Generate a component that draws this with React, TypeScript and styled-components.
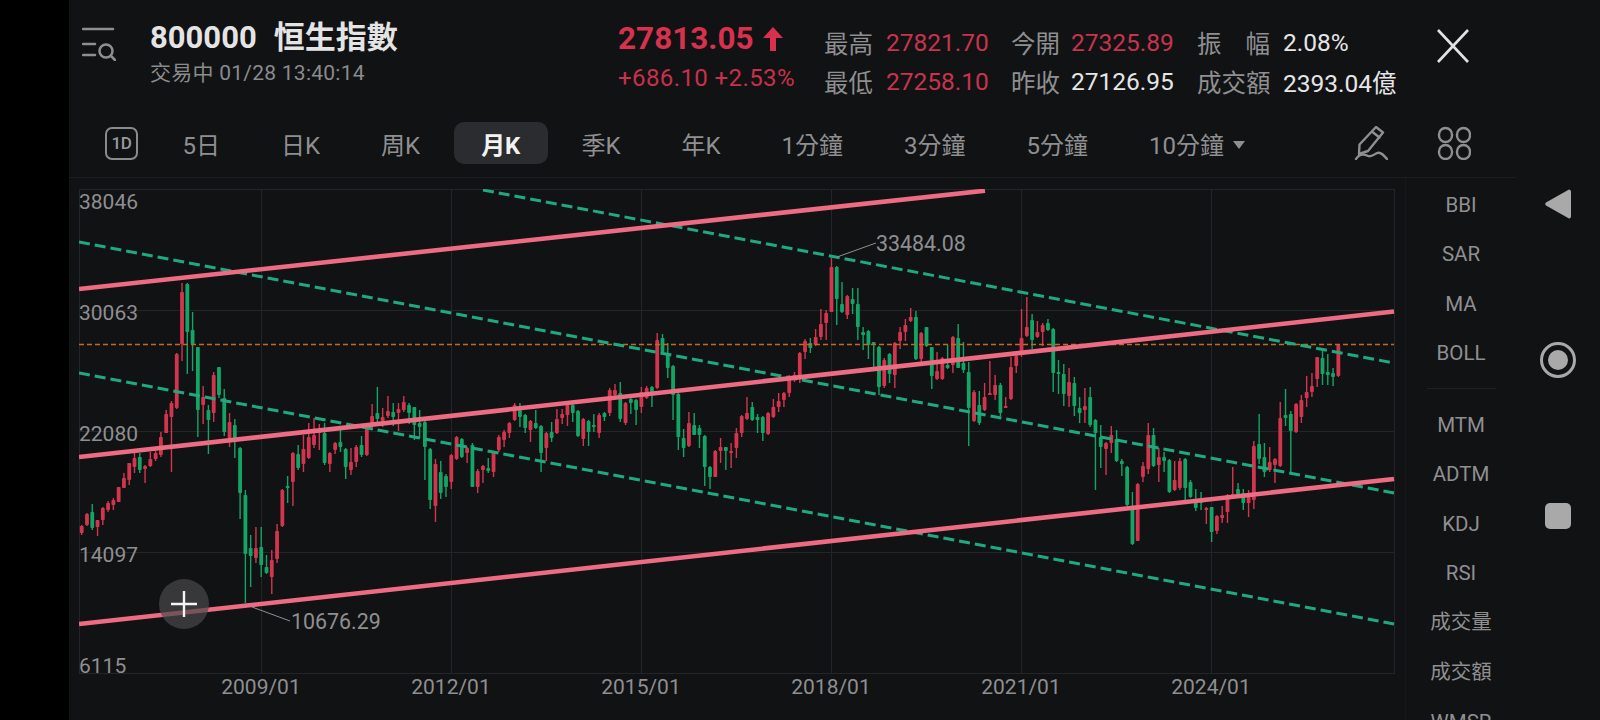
import styled, { createGlobalStyle } from "styled-components";

type Candle = [string, number, number, number, number];

// month candles: colour, body top, body bottom, wick top, wick bottom (page y)
const candles: Candle[] = [
  ["r",526,533,525,535],["r",514,525,513,526],["g",512,528,504,530],["r",520,527,520,536],["r",508,520,507,525],
  ["r",503,510,501,512],["r",500,505,498,510],["r",487,502,487,502],["r",478,488,473,488],["r",463,480,463,485],
  ["r",458,467,453,473],["g",457,470,453,473],["r",466,469,465,483],["r",459,466,452,467],["r",453,459,451,461],
  ["r",437,455,432,457],["r",414,433,410,433],["r",403,417,401,472],["r",354,408,353,409],["r",292,344,283,361],
  ["g",284,332,283,374],["g",330,344,312,371],["g",347,410,347,437],["r",397,405,386,424],["g",410,420,405,454],
  ["r",375,413,372,422],["g",367,395,367,398],["g",398,432,389,436],["r",422,438,413,447],["g",425,440,419,458],
  ["g",448,493,447,519],["g",495,554,490,603],["g",548,556,535,587],["r",548,558,527,563],["g",547,565,527,577],
  ["g",567,573,555,574],["r",560,577,550,594],["r",531,559,524,563],["r",490,526,489,527],["g",486,488,476,503],
  ["r",453,482,452,506],["g",454,468,445,470],["r",449,464,435,472],["r",437,458,423,459],["r",435,445,418,448],
  ["r",429,433,424,450],["g",433,463,423,465],["r",453,464,452,472],["r",443,450,442,454],["g",442,447,430,452],
  ["g",449,467,448,479],["r",462,470,448,475],["r",447,462,445,467],["g",445,455,436,457],["r",428,455,427,456],
  ["r",416,425,404,430],["g",413,419,387,422],["r",417,421,408,427],["r",411,416,396,418],["g",412,417,403,426],
  ["r",409,413,403,431],["r",402,410,396,412],["g",405,413,403,424],["g",407,425,407,440],["g",423,427,410,438],
  ["g",422,447,421,480],["g",449,500,448,509],["r",464,506,459,522],["g",472,493,461,499],["g",476,487,474,497],
  ["r",455,482,454,489],["r",437,459,436,460],["g",439,457,438,458],["r",448,453,447,463],["g",445,487,443,487],
  ["r",471,487,469,493],["r",466,470,465,483],["g",468,471,458,473],["r",453,472,453,477],["r",437,450,435,452],
  ["r",432,440,430,447],["r",423,433,422,438],["r",405,420,403,421],["g",410,417,403,427],["g",415,428,414,433],
  ["r",421,430,420,442],["g",423,428,410,429],["g",426,453,425,472],["r",433,448,432,461],["g",432,438,422,442],
  ["r",419,433,409,434],["r",414,418,409,424],["r",405,415,403,426],["g",405,413,403,422],["g",411,436,410,437],
  ["r",419,439,418,446],["g",421,432,420,446],["g",425,427,414,432],["r",415,433,413,438],["g",413,417,412,421],
  ["r",390,413,388,416],["r",390,395,384,397],["g",393,419,382,422],["r",403,423,402,425],["g",399,403,398,414],
  ["g",400,410,399,425],["r",392,407,387,413],["r",388,398,386,399],["g",387,392,386,407],["r",340,388,333,389],
  ["g",338,352,334,353],["g",353,368,343,378],["g",366,395,365,420],["g",394,437,393,450],["g",438,448,429,457],
  ["r",423,446,412,447],["g",425,435,413,435],["g",428,435,425,448],["g",436,467,435,486],["g",467,477,466,489],
  ["r",451,477,450,477],["r",447,451,438,463],["g",447,451,447,470],["r",451,452,443,468],["r",433,448,428,458],
  ["r",416,433,415,437],["r",413,419,397,420],["g",407,420,402,421],["g",417,420,414,433],["g",417,433,416,441],
  ["r",413,434,412,435],["r",407,417,399,418],["r",401,407,393,412],["r",393,400,392,407],["r",380,393,375,397],
  ["r",375,380,372,382],["r",353,377,352,383],["r",341,352,339,359],["g",343,348,338,353],["r",337,345,329,346],
  ["r",324,337,309,340],["r",313,323,310,340],["r",267,312,258,312],["g",267,299,266,325],["g",304,312,282,313],
  ["r",296,315,295,319],["g",299,304,288,314],["g",304,327,288,340],["g",332,335,327,350],["g",331,345,330,359],
  ["g",342,344,342,367],["g",347,387,346,395],["r",360,386,358,388],["g",354,374,353,383],["r",343,375,342,388],
  ["r",332,341,327,349],["r",325,332,319,341],["r",317,321,308,322],["g",317,359,311,360],["r",333,359,332,362],
  ["g",327,346,327,347],["g",347,376,347,389],["r",371,379,352,380],["r",358,379,357,380],["g",365,368,345,369],
  ["r",337,365,336,373],["g",338,368,324,368],["g",363,370,342,373],["g",372,408,362,446],["r",392,421,390,422],
  ["g",405,423,391,425],["r",397,410,383,411],["r",393,394,361,395],["r",385,395,375,400],["g",385,413,383,416],
  ["r",406,407,397,408],["r",367,399,357,400],["r",356,366,355,373],["r",338,355,309,357],["r",327,336,297,337],
  ["g",320,340,314,349],["r",332,337,321,338],["r",325,332,323,346],["g",323,330,319,331],["g",329,373,328,392],
  ["g",372,374,360,394],["g",374,394,364,406],["r",382,396,368,407],["g",383,406,377,416],["g",408,413,397,423],
  ["r",406,410,388,423],["g",397,425,387,427],["g",420,433,419,490],["g",437,447,425,468],["r",443,449,442,475],
  ["r",435,443,426,453],["g",439,461,430,462],["g",461,464,459,476],["g",467,505,466,506],["g",507,544,492,545],
  ["r",484,541,483,541],["r",466,477,462,482],["r",435,469,423,474],["g",435,466,428,467],["r",457,465,448,482],
  ["g",457,461,452,472],["g",460,492,459,493],["r",480,490,461,491],["r",461,488,458,490],["g",459,488,458,500],
  ["g",482,497,480,498],["g",500,508,489,511],["g",500,503,492,510],["r",508,509,507,524],["g",507,532,507,542],
  ["r",516,531,515,534],["r",515,518,506,523],["r",495,512,494,523],["r",494,496,467,497],["g",489,495,483,497],
  ["g",493,503,489,510],["r",494,503,490,517],["r",446,500,441,509],["g",444,459,414,464],["g",457,472,443,477],
  ["r",462,470,447,472],["r",459,465,458,483],["r",418,466,402,467],["g",415,418,389,426],["g",414,431,411,472],
  ["r",404,432,403,433],["r",400,417,395,423],["r",392,398,376,407],["r",386,392,373,397],["r",357,379,357,387],
  ["g",358,374,350,385],["g",372,375,354,385],["g",373,377,368,386],["r",345,376,344,377],
];

const hGrid = [310, 431, 552];
const vGrid = [261.5, 451.5, 641.5, 831.5, 1021.5, 1211.5];

const priceLabels = [
  { text: "38046", y: 209 },
  { text: "30063", y: 320 },
  { text: "22080", y: 441 },
  { text: "14097", y: 562 },
  { text: "6115", y: 673 },
];

const dateLabels = [
  { text: "2009/01", x: 261 },
  { text: "2012/01", x: 451 },
  { text: "2015/01", x: 641 },
  { text: "2018/01", x: 831 },
  { text: "2021/01", x: 1021 },
  { text: "2024/01", x: 1211 },
];

const pinkLines = [
  [79, 289, 985, 190.7],
  [79, 457, 1394, 311.5],
  [79, 624, 1394, 479],
];

const greenLines = [
  [483, 190, 1394, 363],
  [79, 242, 1394, 493],
  [79, 373, 1394, 624],
];

const tabs = ["5日", "日K", "周K", "月K", "季K", "年K", "1分鐘", "3分鐘", "5分鐘"];
const indicatorsTop = ["BBI", "SAR", "MA", "BOLL"];
const indicatorsMiddle = ["MTM", "ADTM", "KDJ", "RSI"];
const indicatorsVolume = ["成交量", "成交額"];

const Global = createGlobalStyle`
  html, body {
    margin: 0;
    padding: 0;
    background: #000;
  }
  body {
    font-family: Roboto, "Noto Sans CJK TC", sans-serif;
  }
`;

const Page = styled.div`
  display: flex;
  width: 1600px;
  height: 720px;
  overflow: hidden;
  background: #111214;
`;

const LeftEdge = styled.div`
  width: 69px;
  flex: none;
  background: #000;
`;

const Main = styled.div`
  width: 1447px;
  flex: none;
  display: flex;
  flex-direction: column;
`;

const Header = styled.header`
  height: 178px;
  flex: none;
  box-sizing: border-box;
  border-bottom: 1px solid #1c1d20;
`;

const TopRow = styled.div`
  display: flex;
  height: 108px;
  padding-left: 13px;
`;

const MenuIcon = styled.svg`
  width: 34px;
  height: 34px;
  flex: none;
  margin-top: 27px;
  fill: none;
  stroke: #8f8f91;
  stroke-width: 2.5;
  stroke-linecap: round;
`;

const TitleBlock = styled.div`
  width: 502px;
  flex: none;
  padding: 19px 0 0 34px;
  box-sizing: border-box;
`;

const Title = styled.div`
  display: flex;
  gap: 17px;
  font-size: 31px;
  line-height: 38px;
  font-weight: 700;
  color: #e4e4e4;
  white-space: nowrap;
`;

const SubTitle = styled.div`
  margin-top: 2px;
  font-size: 21px;
  line-height: 28px;
  letter-spacing: 0.25px;
  color: #8a8b8d;
  white-space: nowrap;
`;

const Quote = styled.div`
  width: 206px;
  flex: none;
  padding-top: 19px;
  box-sizing: border-box;
  color: #d7314e;
`;

const QuotePrice = styled.div`
  display: flex;
  align-items: center;
  gap: 9px;
  font-size: 31.5px;
  line-height: 40px;
  font-weight: 700;
`;

const QuoteChange = styled.div`
  font-size: 24px;
  line-height: 30px;
  letter-spacing: 0.4px;
  margin-top: 4px;
  color: #c9304c;
  white-space: nowrap;
`;

const Stats = styled.div`
  display: grid;
  grid-template-columns: 62px 125px 60px 126px 86px 150px;
  grid-auto-rows: 39px;
  align-items: center;
  flex: none;
  padding-top: 23px;
  font-size: 24.5px;
  white-space: nowrap;
`;

const StatLabel = styled.span<{ $wide?: boolean }>`
  display: flex;
  justify-content: space-between;
  width: ${(p) => (p.$wide ? 73 : 48)}px;
  color: #8f8f91;
`;

const StatValue = styled.span<{ $red?: boolean }>`
  color: ${(p) => (p.$red ? "#c8334d" : "#e6e6e6")};
`;

const CloseIcon = styled.svg`
  width: 34px;
  height: 34px;
  flex: none;
  margin: 29px 0 0 3px;
  fill: none;
  stroke: #e2e2e2;
  stroke-width: 2.6;
`;

const TabRow = styled.div`
  display: flex;
  align-items: center;
  height: 42px;
  margin-top: 14px;
  padding-left: 36px;
`;

const OneDay = styled.div`
  width: 33px;
  height: 33px;
  flex: none;
  box-sizing: border-box;
  border: 2px solid #8a8b8d;
  border-radius: 7px;
  margin-right: 17px;
  display: flex;
  align-items: center;
  justify-content: center;
  font-size: 17px;
  font-weight: 500;
  letter-spacing: -0.5px;
  color: #9a9a9c;
`;

const Tab = styled.div<{ $active?: boolean }>`
  height: 42px;
  display: flex;
  align-items: center;
  padding: 0 27.5px;
  margin-right: 6px;
  border-radius: 10px;
  flex: none;
  font-size: 24px;
  white-space: nowrap;
  background: ${(p) => (p.$active ? "#2a2c30" : "transparent")};
  color: ${(p) => (p.$active ? "#f2f2f2" : "#8f8f91")};
  font-weight: ${(p) => (p.$active ? 700 : 400)};
`;

const Caret = styled.span`
  width: 0;
  height: 0;
  margin: 4px 0 0 9px;
  border-left: 6px solid transparent;
  border-right: 6px solid transparent;
  border-top: 8px solid #8f8f91;
`;

const TabTools = styled.div`
  display: flex;
  align-items: center;
  margin-left: auto;
  margin-right: 45px;
  gap: 49px;
`;

const ToolIcon = styled.svg`
  width: 34px;
  height: 34px;
  flex: none;
  fill: none;
  stroke: #8f8f91;
  stroke-width: 2.4;
  stroke-linecap: round;
  stroke-linejoin: round;
`;

const Body = styled.div`
  display: flex;
  flex: 1;
  min-height: 0;
`;

const ChartWrap = styled.div`
  position: relative;
  width: 1316px;
  height: 511px;
  flex: none;
  margin: 11px 0 0 10px;
`;

const ChartSvg = styled.svg`
  display: block;
  width: 1316px;
  height: 511px;
`;

const AxisText = styled.text`
  font-family: Roboto, sans-serif;
  font-size: 21px;
  fill: #8f8f91;
`;

const PeakText = styled(AxisText)`
  font-size: 21.4px;
`;

const AddButton = styled.div`
  position: absolute;
  left: 80px;
  top: 390px;
  width: 50px;
  height: 50px;
  border-radius: 50%;
  background: rgba(72, 72, 74, 0.7);
  display: flex;
  align-items: center;
  justify-content: center;
`;

const PlusIcon = styled.svg`
  width: 26px;
  height: 26px;
  stroke: #f4f4f4;
  stroke-width: 2.4;
`;

const Indicators = styled.div`
  flex: 1;
  margin-left: 10px;
  padding-top: 2px;
  border-left: 1px solid #17181a;
  display: flex;
  flex-direction: column;
  overflow: hidden;
`;

const Indicator = styled.div<{ $cjk?: boolean }>`
  height: 49.5px;
  flex: none;
  box-sizing: border-box;
  padding-bottom: ${(p) => (p.$cjk ? 5 : 0)}px;
  display: flex;
  align-items: center;
  justify-content: center;
  font-size: 20.5px;
  color: #8f8f91;
`;

const IndicatorRule = styled.div`
  height: 1px;
  flex: none;
  margin: 10px 20px 11px 21px;
  background: #1f2023;
`;

const NavRail = styled.nav`
  width: 84px;
  flex: none;
  display: flex;
  flex-direction: column;
  align-items: center;
  padding-top: 189px;
  gap: 123px;
  box-sizing: border-box;
`;

const NavBack = styled.svg`
  width: 26px;
  height: 30px;
  fill: #a9a9a9;
`;

const NavHome = styled.div`
  width: 36px;
  height: 36px;
  box-sizing: border-box;
  border: 3px solid #a9a9a9;
  border-radius: 50%;
  display: flex;
  align-items: center;
  justify-content: center;
  &::after {
    content: "";
    width: 20px;
    height: 20px;
    border-radius: 50%;
    background: #a9a9a9;
  }
`;

const NavRecent = styled.div`
  width: 26px;
  height: 26px;
  margin-top: 2px;
  border-radius: 5px;
  background: #a9a9a9;
`;

function Chart() {
  return (
    <ChartSvg viewBox="79 189 1316 511">
      <rect x="79.5" y="189.5" width="1315" height="484" fill="none" stroke="#242528" />
      {hGrid.map((y) => (
        <line key={y} x1="79" x2="1395" y1={y + 0.5} y2={y + 0.5} stroke="#242528" />
      ))}
      {vGrid.map((x) => (
        <line key={x} x1={x} x2={x} y1="189" y2="673" stroke="#242528" />
      ))}
      {candles.map(([c, top, bottom, high, low], i) => {
        const x = 81.7 + i * 5.28;
        const color = c === "r" ? "#d2364f" : "#12a565";
        return (
          <g key={i} fill={color}>
            <rect x={x - 0.7} y={high} width="1.4" height={low - high} />
            <rect x={x - 1.9} y={top} width="3.8" height={Math.max(bottom - top, 2)} rx="0.8" />
          </g>
        );
      })}
      <line x1="79" x2="1394" y1="344.5" y2="344.5" stroke="#c46a1e" strokeWidth="1.5" strokeDasharray="5 3" />
      {greenLines.map(([x1, y1, x2, y2]) => (
        <line key={y1} x1={x1} y1={y1} x2={x2} y2={y2} stroke="#1fa97f" strokeWidth="3" strokeDasharray="11 5" />
      ))}
      {pinkLines.map(([x1, y1, x2, y2]) => (
        <line key={y1} x1={x1} y1={y1} x2={x2} y2={y2} stroke="#ee6b84" strokeWidth="4.6" />
      ))}
      {priceLabels.map((l) => (
        <AxisText key={l.text} x="79" y={l.y}>{l.text}</AxisText>
      ))}
      {dateLabels.map((l) => (
        <AxisText key={l.text} x={l.x} y="694" textAnchor="middle">{l.text}</AxisText>
      ))}
      <line x1="837" y1="257" x2="876" y2="243" stroke="#8f8f91" strokeWidth="1" />
      <PeakText x="876" y="251">33484.08</PeakText>
      <line x1="252" y1="607" x2="290" y2="621" stroke="#8f8f91" strokeWidth="1" />
      <PeakText x="291" y="629">10676.29</PeakText>
    </ChartSvg>
  );
}

export default function App() {
  return (
    <Page>
      <Global />
      <LeftEdge />
      <Main>
        <Header>
          <TopRow>
            <MenuIcon viewBox="0 0 34 34">
              <path d="M1 2h30M1 17h12M1 28h12" />
              <circle cx="24" cy="24" r="6.5" />
              <path d="M29 29l4 4" />
            </MenuIcon>
            <TitleBlock>
              <Title>
                <span>800000</span>
                <span>恒生指數</span>
              </Title>
              <SubTitle>交易中 01/28 13:40:14</SubTitle>
            </TitleBlock>
            <Quote>
              <QuotePrice>
                27813.05
                <svg width="20" height="24" viewBox="0 0 20 24" fill="#d7314e">
                  <path d="M10 0l10 11h-7v13H7V11H0z" />
                </svg>
              </QuotePrice>
              <QuoteChange>+686.10 +2.53%</QuoteChange>
            </Quote>
            <Stats>
              <StatLabel>最高</StatLabel>
              <StatValue $red>27821.70</StatValue>
              <StatLabel>今開</StatLabel>
              <StatValue $red>27325.89</StatValue>
              <StatLabel $wide><span>振</span><span>幅</span></StatLabel>
              <StatValue>2.08%</StatValue>
              <StatLabel>最低</StatLabel>
              <StatValue $red>27258.10</StatValue>
              <StatLabel>昨收</StatLabel>
              <StatValue>27126.95</StatValue>
              <StatLabel $wide>成交額</StatLabel>
              <StatValue>2393.04億</StatValue>
            </Stats>
            <CloseIcon viewBox="0 0 34 34">
              <path d="M2 1l30 32M32 1L2 33" />
            </CloseIcon>
          </TopRow>
          <TabRow>
            <OneDay>1D</OneDay>
            {tabs.map((t) => (
              <Tab key={t} $active={t === "月K"}>{t}</Tab>
            ))}
            <Tab>
              10分鐘
              <Caret />
            </Tab>
            <TabTools>
              <ToolIcon viewBox="0 0 34 34">
                <path d="M22 1l7 5.5L14 25l-9 3 .5-9.5zM18.5 6l7 5.5" />
                <path d="M2 33c3-5 8-5 12-3 5 2 8-5 12-3 3 1 5 4 7 6" />
              </ToolIcon>
              <ToolIcon viewBox="0 0 34 34">
                <rect x="2" y="2" width="13" height="14" rx="6.5" />
                <rect x="20" y="2" width="13" height="14" rx="6.5" />
                <rect x="2" y="19" width="13" height="14" rx="6.5" />
                <rect x="20" y="19" width="13" height="14" rx="6.5" />
              </ToolIcon>
            </TabTools>
          </TabRow>
        </Header>
        <Body>
          <ChartWrap>
            <Chart />
            <AddButton>
              <PlusIcon viewBox="0 0 26 26">
                <path d="M0 13h26M13 0v26" />
              </PlusIcon>
            </AddButton>
          </ChartWrap>
          <Indicators>
            {indicatorsTop.map((t) => (
              <Indicator key={t}>{t}</Indicator>
            ))}
            <IndicatorRule />
            {indicatorsMiddle.map((t) => (
              <Indicator key={t}>{t}</Indicator>
            ))}
            {indicatorsVolume.map((t) => (
              <Indicator key={t} $cjk>{t}</Indicator>
            ))}
            <Indicator>WMSR</Indicator>
          </Indicators>
        </Body>
      </Main>
      <NavRail>
        <NavBack viewBox="0 0 26 30">
          <path d="M24 .5c1 0 2 1 2 2v25c0 1-1 2.300-2 2L1 16.500c-1-.7-1-2.300 0-3z" />
        </NavBack>
        <NavHome />
        <NavRecent />
      </NavRail>
    </Page>
  );
}
